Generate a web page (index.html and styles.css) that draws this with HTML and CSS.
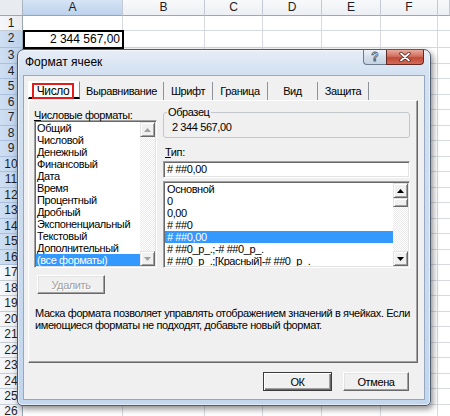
FILE: index.html
```html
<!DOCTYPE html>
<html lang="ru">
<head>
<meta charset="utf-8">
<title>Формат ячеек</title>
<link rel="stylesheet" href="styles.css">
</head>
<body>
<div class="sheet">
  <div class="hdr">
    <div class="corner"></div>
    <div class="ch w-a sel">A</div>
    <div class="ch w-b">B</div>
    <div class="ch w-c">C</div>
    <div class="ch w-d">D</div>
    <div class="ch w-e">E</div>
    <div class="ch w-f">F</div>
    <div class="ch w-g"></div>
  </div>
  <div class="row r1"><div class="rh">1</div><div class="cells"></div></div>
  <div class="row r2"><div class="rh sel">2</div><div class="cells"><div class="active">2 344 567,00</div></div></div>
  <div class="row"><div class="rh sel">3</div><div class="cells"></div></div>
  <div class="row"><div class="rh sel">4</div><div class="cells"></div></div>
  <div class="row"><div class="rh sel">5</div><div class="cells"></div></div>
  <div class="row"><div class="rh sel">6</div><div class="cells"></div></div>
  <div class="row"><div class="rh sel">7</div><div class="cells"></div></div>
  <div class="row"><div class="rh sel">8</div><div class="cells"></div></div>
  <div class="row"><div class="rh sel">9</div><div class="cells"></div></div>
  <div class="row"><div class="rh sel">10</div><div class="cells"></div></div>
  <div class="row"><div class="rh sel">11</div><div class="cells"></div></div>
  <div class="row"><div class="rh sel">12</div><div class="cells"></div></div>
  <div class="row"><div class="rh sel">13</div><div class="cells"></div></div>
  <div class="row"><div class="rh sel">14</div><div class="cells"></div></div>
  <div class="row"><div class="rh sel">15</div><div class="cells"></div></div>
  <div class="row"><div class="rh sel">16</div><div class="cells"></div></div>
  <div class="row"><div class="rh">17</div><div class="cells"></div></div>
  <div class="row"><div class="rh">18</div><div class="cells"></div></div>
  <div class="row"><div class="rh">19</div><div class="cells"></div></div>
  <div class="row"><div class="rh">20</div><div class="cells"></div></div>
  <div class="row"><div class="rh">21</div><div class="cells"></div></div>
  <div class="row"><div class="rh">22</div><div class="cells"></div></div>
  <div class="row"><div class="rh">23</div><div class="cells"></div></div>
  <div class="row"><div class="rh">24</div><div class="cells"></div></div>
  <div class="row"><div class="rh">25</div><div class="cells"></div></div>
  <div class="row last"><div class="rh">26</div><div class="cells"></div></div>

  <div class="dialog">
    <div class="titlebar">
      <span class="title">Формат ячеек</span>
      <div class="capbtns">
        <div class="cbtn help">?</div>
        <div class="cbtn close">
          <svg width="12" height="10" viewBox="0 0 12 10"><path d="M2 1.5L10 8.5M10 1.5L2 8.5" stroke="#5a1f1a" stroke-width="3.4" stroke-linecap="round"/><path d="M2 1.5L10 8.5M10 1.5L2 8.5" stroke="#fff" stroke-width="1.8" stroke-linecap="round"/></svg>
        </div>
      </div>
    </div>
    <div class="client">
      <div class="tabs">
        <div class="tab t1 active"><span class="mark">Число</span></div>
        <div class="tab t2">Выравнивание</div>
        <div class="tab t3">Шрифт</div>
        <div class="tab t4">Граница</div>
        <div class="tab t5">Вид</div>
        <div class="tab t6">Защита</div>
      </div>
      <div class="page">
        <div class="cols">
          <div class="lcol">
            <div class="lbl lbl-cat"><u>Ч</u>исловые форматы:</div>
            <div class="list cat">
              <div class="items">
                <div class="it">Общий</div>
                <div class="it">Числовой</div>
                <div class="it">Денежный</div>
                <div class="it">Финансовый</div>
                <div class="it">Дата</div>
                <div class="it">Время</div>
                <div class="it">Процентный</div>
                <div class="it">Дробный</div>
                <div class="it">Экспоненциальный</div>
                <div class="it">Текстовый</div>
                <div class="it">Дополнительный</div>
                <div class="it on">(все форматы)</div>
              </div>
              <div class="sb dis">
                <div class="sbb"><svg width="7" height="4" viewBox="0 0 7 4"><path d="M0 4H7L3.5 0Z"/></svg></div>
                <div class="track"></div>
                <div class="sbb"><svg width="7" height="4" viewBox="0 0 7 4"><path d="M0 0H7L3.5 4Z"/></svg></div>
              </div>
            </div>
          </div>
          <div class="rcol">
            <fieldset class="sample"><legend>Образец</legend><div class="sval">2 344 567,00</div></fieldset>
            <div class="lbl lbl-tip"><u>Т</u>ип:</div>
            <div class="input">#&nbsp;##0,00</div>
            <div class="list types">
              <div class="items">
                <div class="it">Основной</div>
                <div class="it">0</div>
                <div class="it">0,00</div>
                <div class="it"># ##0</div>
                <div class="it on"># ##0,00</div>
                <div class="it"># ##0_р_.;-# ##0_р_.</div>
                <div class="it"># ##0_р_.;[Красный]-# ##0_р_.</div>
              </div>
              <div class="sb">
                <div class="sbb"><svg width="7" height="4" viewBox="0 0 7 4"><path d="M0 4H7L3.5 0Z"/></svg></div>
                <div class="thumb"></div>
                <div class="track"></div>
                <div class="sbb"><svg width="7" height="4" viewBox="0 0 7 4"><path d="M0 0H7L3.5 4Z"/></svg></div>
              </div>
            </div>
          </div>
        </div>
        <div class="btn del">Удалить</div>
        <p class="desc">Маска формата позволяет управлять отображением значений в ячейках. Если имеющиеся форматы не подходят, добавьте новый формат.</p>
      </div>
      <div class="footer">
        <div class="btn ok">ОК</div>
        <div class="btn cancel">Отмена</div>
      </div>
    </div>
  </div>
</div>
</body>
</html>
```

FILE: styles.css
```css
* { box-sizing: border-box; }
html, body { margin: 0; padding: 0; background: #fff; }
body { width: 450px; height: 416px; overflow: hidden; font-family: "Liberation Sans", Arial, sans-serif; }

.sheet { position: relative; width: 450px; height: 416px; overflow: hidden; background: #fff; }

/* column headers */
.hdr { display: flex; height: 16px; }
.corner { flex: none; width: 23px; background: #e8ecf1; border-right: 1px solid #aab4c1; border-bottom: 1px solid #9aa7b6; }
.ch { flex: none; height: 16px; border-right: 1px solid #c3cad3; border-bottom: 1px solid #9aa7b6;
  background: linear-gradient(#f8f9fb, #eceff3); font-size: 12px; line-height: 15px; text-align: center; color: #1e1e1e; }
.ch.sel { background: linear-gradient(#d6e4f5, #bcd2ec); border-bottom-color: #8ba6c6; }
.w-a { width: 100px; }
.w-b { width: 82px; }
.w-c { width: 58px; }
.w-d { width: 59px; }
.w-e { width: 59px; }
.w-f { width: 57px; }
.w-g { flex: 1; }

/* rows */
.row { display: flex; height: 15.5px; }
.r1 { height: 15px; }
.r2 { height: 17px; }
.row.last { height: 11.5px; }
.rh { flex: none; width: 23px; border-right: 1px solid #9aa7b6; border-bottom: 1px solid #c6ccd4;
  background: linear-gradient(90deg, #f6f7f9, #e9ecf0); font-size: 12px; line-height: 14px; text-align: center; color: #1e1e1e; }
.row.last .rh { border-bottom: 0; line-height: 12px; }
.rh.sel { background: linear-gradient(90deg, #cfdff3, #bcd1eb); border-bottom-color: #a9bfdb; }
.cells { flex: 1; border-bottom: 1px solid #d6dae0;
  background:
    linear-gradient(#d6dae0, #d6dae0) 99px 0 / 1px 100% no-repeat,
    linear-gradient(#d6dae0, #d6dae0) 181px 0 / 1px 100% no-repeat,
    linear-gradient(#d6dae0, #d6dae0) 239px 0 / 1px 100% no-repeat,
    linear-gradient(#d6dae0, #d6dae0) 298px 0 / 1px 100% no-repeat,
    linear-gradient(#d6dae0, #d6dae0) 357px 0 / 1px 100% no-repeat,
    linear-gradient(#d6dae0, #d6dae0) 414px 0 / 1px 100% no-repeat; }
.row.last .cells { border-bottom: 0; }
.active { position: relative; z-index: 1; width: 101px; height: 19px; margin-top: -1px; border: 2px solid #000;
  font-size: 12px; line-height: 15px; text-align: right; padding-right: 2px; color: #000; background: #fff; }

/* dialog window */
.dialog { position: absolute; left: 17px; top: 49px; z-index: 2; width: 414px; height: 357px;
  border: 1px solid #4f5c6d; border-radius: 7px 7px 5px 5px;
  background: linear-gradient(#e6edf6 0, #d3e1f1 24px, #c2d6ee 100%);
  padding: 0 5px 5px; display: flex; flex-direction: column;
  box-shadow: 2px 3px 6px rgba(0, 0, 0, 0.45), inset 0 0 0 1px rgba(255, 255, 255, 0.55); }
.titlebar { flex: none; height: 25px; display: flex; align-items: flex-start; }
.title { font-size: 12px; line-height: 25px; padding-left: 2px; color: #000; }
.capbtns { margin-left: auto; margin-right: 1px; display: flex; }
.cbtn { height: 15px; display: flex; align-items: center; justify-content: center; }
.help { width: 23px; border: 1px solid #6b7a8e; border-top: 0; border-right: 0; border-radius: 0 0 0 4px;
  background: linear-gradient(#eef3f9, #d5dfeb 50%, #c5d2e2); font-weight: bold; font-size: 12px; line-height: 13px;
  color: #fff; -webkit-text-stroke: 0.8px #45556a; }
.close { width: 38px; border: 1px solid #5e2a26; border-top: 0; border-radius: 0 0 4px 0;
  background: linear-gradient(#e9a99d, #d0705f 45%, #c04a38 55%, #d36a55); }

.client { flex: 1; background: #f0f0f0; border: 1px solid #95a8c0; display: flex; flex-direction: column;
  font-size: 11px; letter-spacing: -0.4px; color: #000; }

/* tabs */
.tabs { display: flex; height: 18px; margin: 6px 0 0 4px; }
.tab { flex: none; height: 18px; line-height: 17px; text-align: center; border-right: 1px solid #8d9299; padding-top: 1px; }
.tab.active { border-top: 1px solid #fff; border-left: 1px solid #fff; padding-top: 1px; }
.t1 { width: 52px; text-align: left; }
.t2 { width: 84px; }
.t3 { width: 49px; }
.t4 { width: 55px; }
.t5 { width: 50px; }
.t6 { width: 51px; }
.mark { display: block; width: 42px; height: 16px; margin: 0 0 0 3px; border: 2px solid #e41c1c; text-align: center; line-height: 12px; }

.page { flex: none; width: 390px; height: 263px; margin-left: 4px;
  border: 1px solid; border-color: #fff #696969 #696969 #fff; box-shadow: inset -1px -1px 0 #a0a0a0;
  padding: 9px 0 0 5px; }
.cols { display: flex; gap: 6px; }
.lcol { flex: none; width: 123px; }
.rcol { flex: none; width: 247px; }
.lbl { line-height: 12px; }
.lbl-cat { line-height: 10px; }
.lbl-tip { margin-top: 8px; padding-left: 2px; }

.list { display: flex; background: #fff; border: 1px solid; border-color: #a0a0a0 #fff #fff #a0a0a0;
  box-shadow: inset 1px 1px 0 #696969, inset -1px -1px 0 #e3e3e3; padding: 1px; }
.items { flex: 1; overflow: hidden; }
.it { line-height: 12px; white-space: pre; padding-left: 1px; }
.it.on { background: #3399ff; color: #fff; }
.cat { height: 148px; }
.types { height: 87px; margin-top: 3px; }
.types .it { padding-left: 2px; }

.sb { flex: none; width: 15px; display: flex; flex-direction: column; }
.sbb { flex: none; height: 15px; background: #f0f0f0; border: 1px solid; border-color: #e3e3e3 #696969 #696969 #e3e3e3;
  box-shadow: inset 1px 1px 0 #fff, inset -1px -1px 0 #a0a0a0; display: flex; align-items: center; justify-content: center; }
.sbb svg { fill: #000; display: block; }
.sb.dis .sbb svg { fill: #a0a0a0; }
.thumb { flex: none; height: 9px; background: #f0f0f0; border: 1px solid; border-color: #e3e3e3 #696969 #696969 #e3e3e3;
  box-shadow: inset 1px 1px 0 #fff, inset -1px -1px 0 #a0a0a0; }
.track { flex: 1; background: repeating-conic-gradient(#fff 0 25%, #ebebeb 0 50%) 0 0 / 2px 2px; }

.sample { margin: -4px 0 0; border: 1px solid #c3c7cc; border-radius: 3px; padding: 3px 0 4px 8px; min-width: 0; }
.sample legend { padding: 0 1px; margin-left: -5px; line-height: 12px; font-size: 11px; }
.sval { line-height: 12px; }

.input { height: 17px; margin-top: 3px; background: #fff; border: 1px solid; border-color: #a0a0a0 #fff #fff #a0a0a0;
  box-shadow: inset 1px 1px 0 #696969, inset -1px -1px 0 #e3e3e3; padding: 1px 0 0 3px; line-height: 13px; white-space: pre; }

.btn { height: 19px; background: #f0f0f0; border: 1px solid; border-color: #fff #696969 #696969 #fff;
  box-shadow: inset -1px -1px 0 #a0a0a0, inset 1px 1px 0 #e3e3e3; display: flex; align-items: center; justify-content: center; font-size: 11px; }
.del { width: 68px; margin: 7px 0 0 3px; color: #a0a0a0; text-shadow: 1px 1px 0 #fff; }
.desc { margin: 13px 0 0 1px; width: 375px; line-height: 12px; font-size: 11px; }

.footer { display: flex; justify-content: flex-end; gap: 11px; padding-right: 15px; margin-top: 9px; }
.ok { width: 69px; border-color: #3c3c3c; box-shadow: inset 1px 1px 0 #fff, inset -1px -1px 0 #696969, inset -2px -2px 0 #a0a0a0; }
.cancel { width: 66px; }
```
